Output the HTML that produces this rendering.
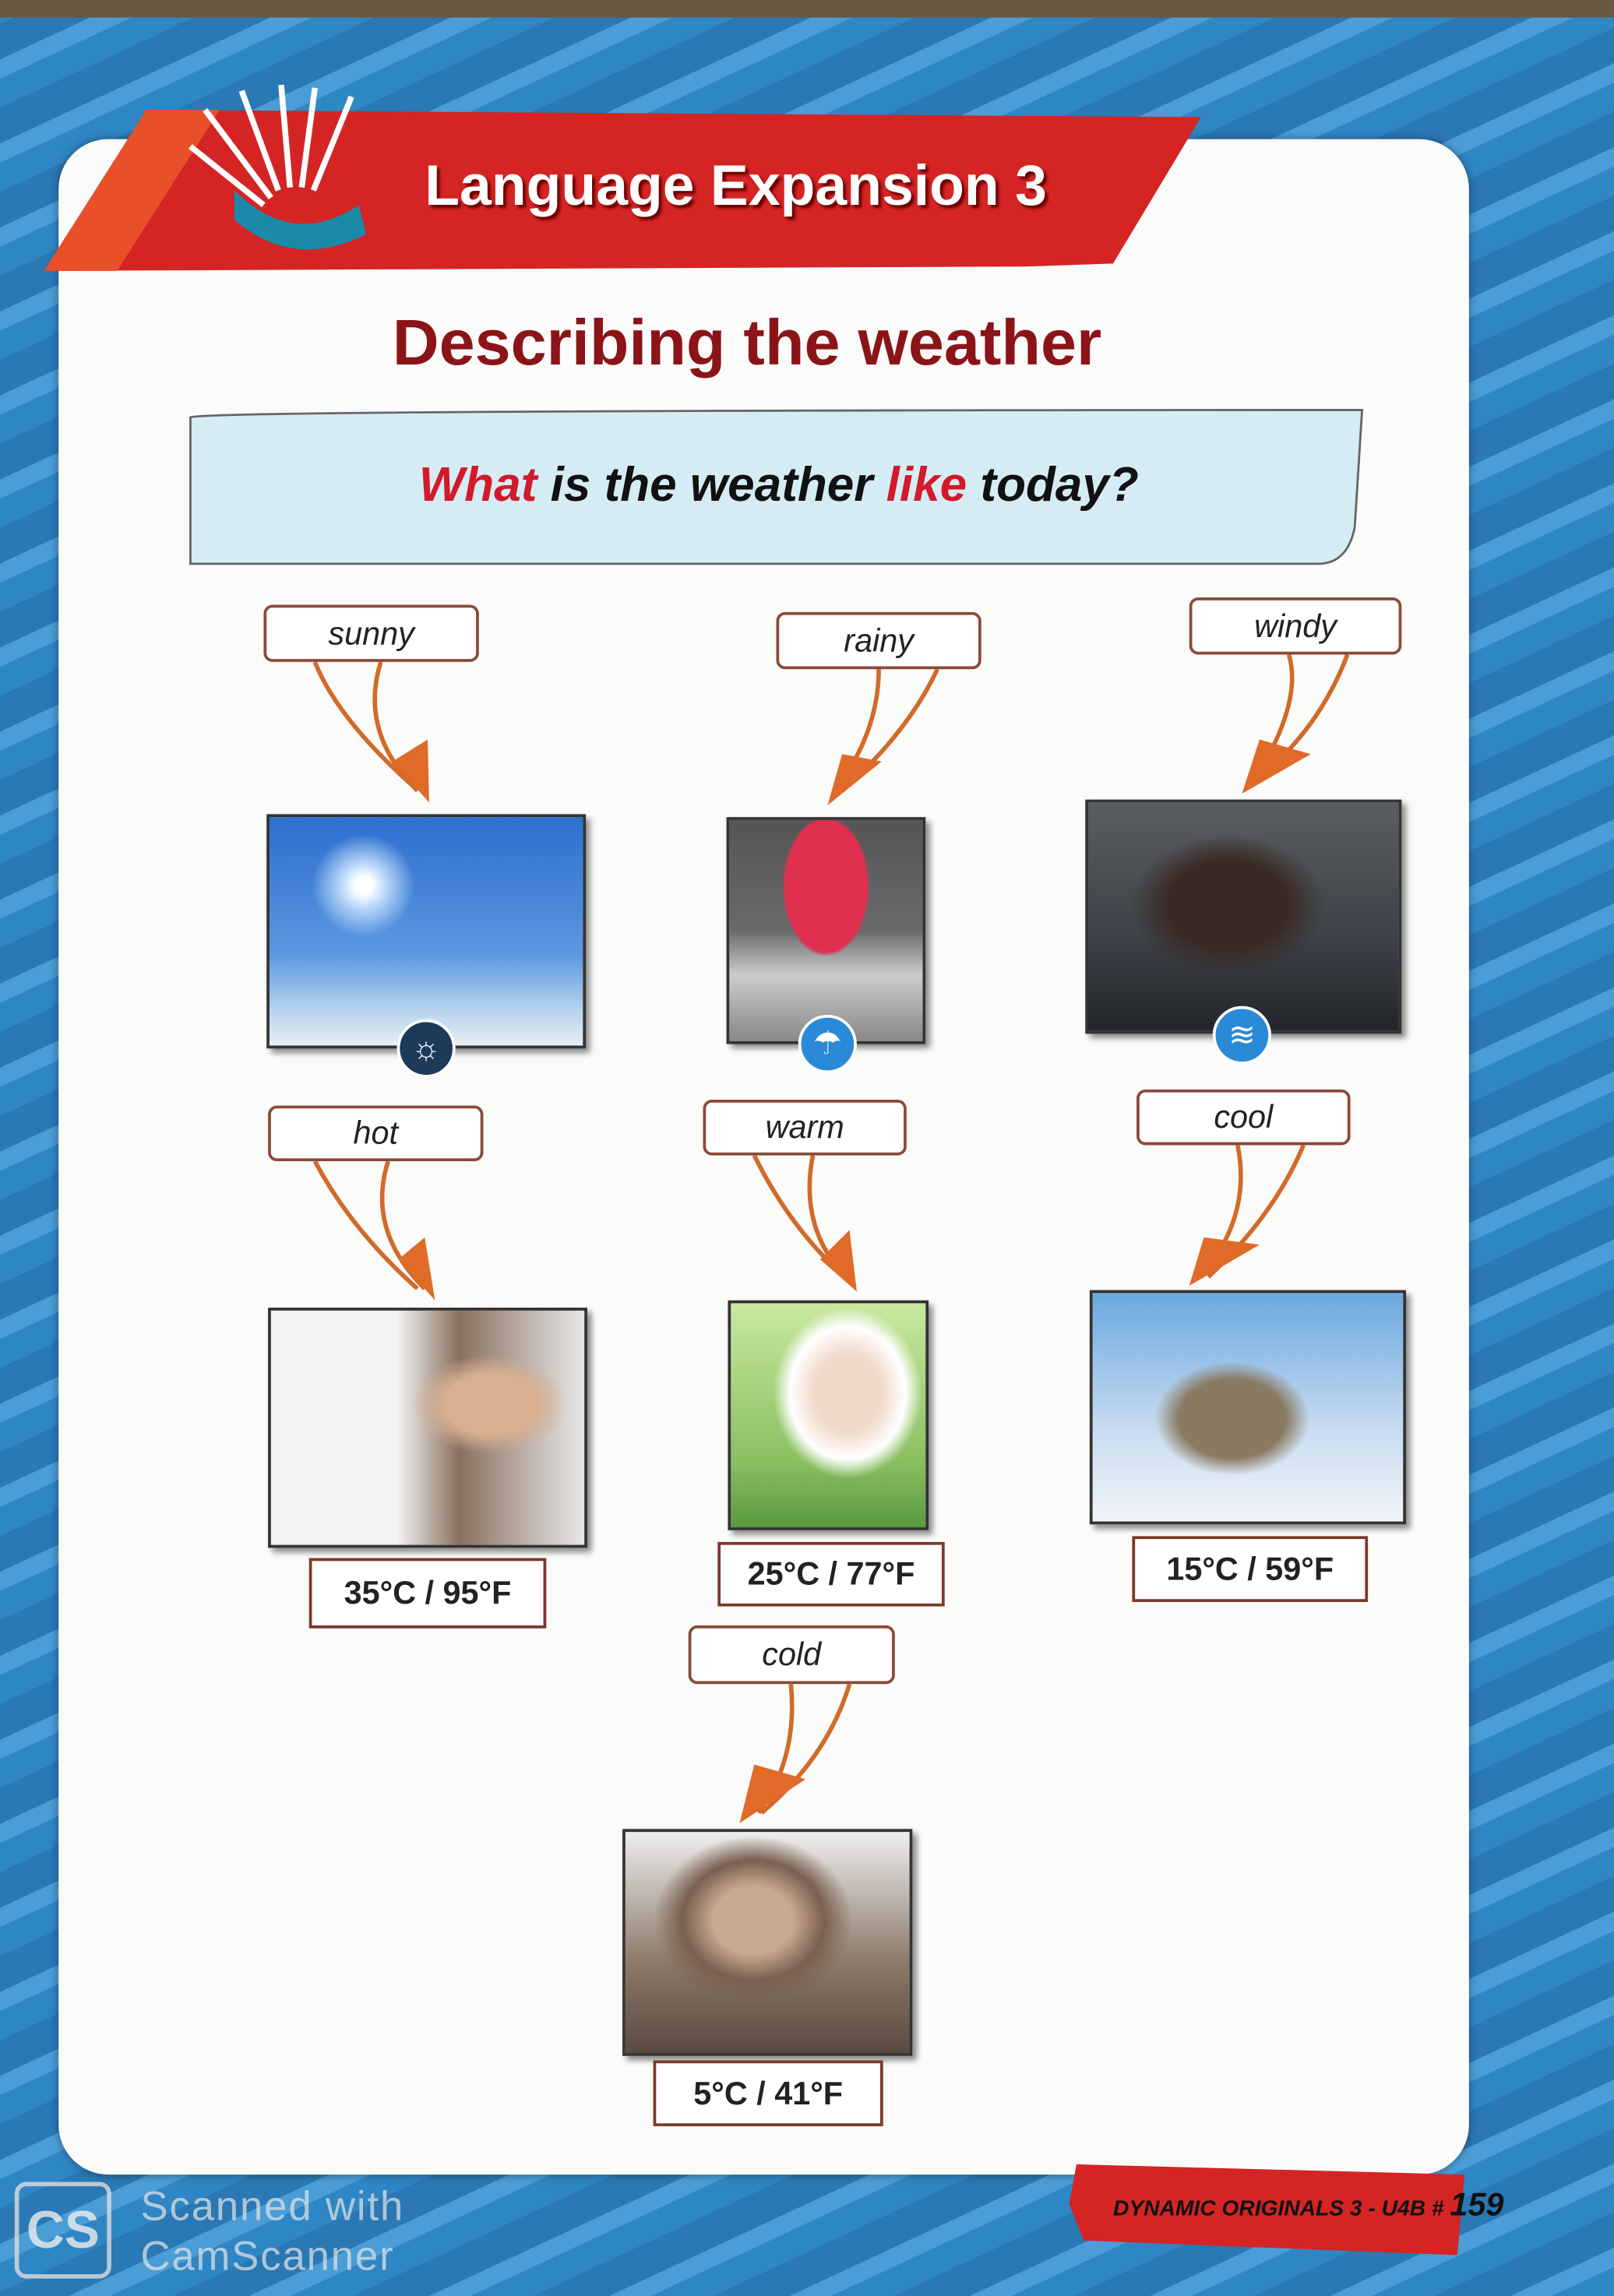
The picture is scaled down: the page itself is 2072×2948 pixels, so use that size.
<!DOCTYPE html>
<html><head><meta charset="utf-8"><style>
html,body{margin:0;padding:0;width:2072px;height:2948px;overflow:hidden;background:#2a7fb8}
#w{position:absolute;left:0;top:0;width:1102px;height:1568px;transform:scale(1.8802);transform-origin:0 0;overflow:hidden;
background:repeating-linear-gradient(-25deg,#2f86c4 0 18px,#4a9dd6 18px 30px,#2a78b4 30px 52px);font-family:"Liberation Sans",sans-serif}
.abs{position:absolute}
.card{left:40px;top:95px;width:963px;height:1390px;background:#fbfbfa;border-radius:34px;box-shadow:0 0 6px rgba(0,0,0,.4)}
.lbl{position:absolute;background:#fff;border:2px solid #8a4a3a;border-radius:6px;font-style:italic;font-size:22px;color:#222;text-align:center;box-sizing:border-box}
.ph{position:absolute;border:2px solid #333;box-shadow:3px 3px 4px rgba(0,0,0,.45);box-sizing:border-box}
.tmp{position:absolute;background:#fff;border:2px solid #7a3a2a;font-weight:bold;font-size:22px;color:#222;text-align:center;box-sizing:border-box}
.ic{position:absolute;width:40px;height:40px;border-radius:50%;border:2px solid #fff;box-sizing:border-box;color:#fff;font-size:22px;text-align:center;line-height:36px}
</style></head><body><div id="w">
<div class="abs" style="left:0;top:0;width:1102px;height:12px;background:#6a5840"></div>
<div class="abs card"></div>
<svg class="abs" style="left:0;top:0" width="1102" height="1568">
<polygon points="30,185 100,75 820,80 760,180 700,182" fill="#d42424"/>
<polygon points="30,185 100,75 150,75 80,185" fill="#e8502a"/>
<g stroke="#fff" stroke-width="4"><line x1="185" y1="135" x2="140" y2="75"/><line x1="190" y1="130" x2="165" y2="62"/><line x1="198" y1="128" x2="192" y2="58"/><line x1="206" y1="128" x2="215" y2="60"/><line x1="214" y1="130" x2="240" y2="66"/><line x1="180" y1="140" x2="130" y2="100"/></g>
<path d="M160,130 Q200,170 245,140 L250,160 Q200,185 160,150Z" fill="#1a8aa8"/>
<path d="M130,285 Q140,280 930,280 L925,360 Q920,385 900,385 L130,385Z" fill="#d6ecf5" stroke="#666" stroke-width="1.5"/>
<g fill="none" stroke="#d26a2a" stroke-width="3">
<path d="M215,452 Q230,490 280,535"/><path d="M260,452 Q245,500 285,540"/>
<path d="M640,457 Q620,500 575,540"/><path d="M600,457 Q600,500 570,540"/>
<path d="M920,447 Q900,500 855,535"/><path d="M880,447 Q890,480 855,535"/>
<path d="M215,793 Q240,840 285,880"/><path d="M265,793 Q250,840 290,880"/>
<path d="M515,789 Q540,840 580,875"/><path d="M555,789 Q545,840 580,875"/>
<path d="M890,782 Q870,830 825,872"/><path d="M845,782 Q855,830 820,872"/>
<path d="M580,1150 Q565,1200 520,1238"/><path d="M540,1150 Q545,1200 518,1238"/>
</g>
<g fill="#e06a28">
<polygon points="268,520 293,548 292,505"/><polygon points="565,550 602,520 575,515"/>
<polygon points="848,542 895,515 860,505"/><polygon points="272,860 297,888 290,845"/>
<polygon points="585,882 580,840 560,860"/><polygon points="812,878 860,850 822,845"/>
<polygon points="505,1245 550,1215 515,1205"/>
</g>
<polygon points="735,1478 1000,1485 995,1540 740,1530 730,1505" fill="#d42424"/>
</svg>
<div class="abs" style="left:290px;top:106px;font-size:39px;color:#fff;font-weight:bold;text-shadow:2px 2px 2px #600">Language Expansion 3</div>
<div class="abs" style="left:268px;top:210px;font-size:44px;color:#8a1418;font-weight:bold">Describing the weather</div>
<div class="abs" style="left:286px;top:312px;font-size:33px;font-weight:bold;font-style:italic;color:#111"><span style="color:#d21a2a">What</span> is the weather <span style="color:#d21a2a">like</span> today?</div>
<div class="lbl" style="left:180px;top:413px;width:147px;height:39px;line-height:35px">sunny</div>
<div class="lbl" style="left:530px;top:418px;width:140px;height:39px;line-height:35px">rainy</div>
<div class="lbl" style="left:812px;top:408px;width:145px;height:39px;line-height:35px">windy</div>
<div class="lbl" style="left:183px;top:755px;width:147px;height:38px;line-height:34px">hot</div>
<div class="lbl" style="left:480px;top:751px;width:139px;height:38px;line-height:34px">warm</div>
<div class="lbl" style="left:776px;top:744px;width:146px;height:38px;line-height:34px">cool</div>
<div class="lbl" style="left:470px;top:1110px;width:141px;height:40px;line-height:36px">cold</div>
<div class="ph" style="left:182px;top:556px;width:218px;height:160px;background:radial-gradient(circle at 30% 30%,#fff 0 6px,#cfe6ff 12px,transparent 35px),linear-gradient(#2e6fd0,#5a98e0 60%,#b8d4ee 85%,#e8eef4)"></div>
<div class="ph" style="left:496px;top:558px;width:136px;height:155px;background:radial-gradient(ellipse at 50% 30%,#e03050 0 30%,transparent 32%),linear-gradient(#555,#6a6a6a 50%,#ccc 70%,#888)"></div>
<div class="ph" style="left:741px;top:546px;width:216px;height:160px;background:radial-gradient(ellipse at 45% 45%,#3a2a24 0 25%,transparent 40%),linear-gradient(#5a5e62,#3c4248 60%,#22262a)"></div>
<div class="ph" style="left:183px;top:893px;width:218px;height:164px;background:radial-gradient(ellipse at 70% 40%,#d8b090 0 15%,transparent 25%),linear-gradient(90deg,#f4f4f4 40%,#8a7060 60%,#e8e8e8)"></div>
<div class="ph" style="left:497px;top:888px;width:137px;height:157px;background:radial-gradient(ellipse at 60% 40%,#f0d8c8 0 20%,#fff 35%,transparent 45%),linear-gradient(#c8e8a0,#8ac060 70%,#5a9a40)"></div>
<div class="ph" style="left:744px;top:881px;width:216px;height:160px;background:radial-gradient(ellipse at 45% 55%,#8a7a60 0 22%,transparent 32%),linear-gradient(#6aa8e0,#c8dcf0 60%,#f0f4f8)"></div>
<div class="ph" style="left:425px;top:1249px;width:198px;height:155px;background:radial-gradient(ellipse at 45% 40%,#c8a890 0 18%,#7a6050 32%,transparent 45%),linear-gradient(#eee,#8a7868 60%,#5a4a40)"></div>
<div class="ic" style="left:271px;top:696px;background:#1e3a5a">☼</div>
<div class="ic" style="left:545px;top:693px;background:#2a8ad8">☂</div>
<div class="ic" style="left:828px;top:687px;background:#2a8ad8">≋</div>
<div class="tmp" style="left:211px;top:1064px;width:162px;height:48px;line-height:44px">35°C / 95°F</div>
<div class="tmp" style="left:490px;top:1053px;width:155px;height:44px;line-height:40px">25°C / 77°F</div>
<div class="tmp" style="left:773px;top:1049px;width:161px;height:45px;line-height:41px">15°C / 59°F</div>
<div class="tmp" style="left:446px;top:1407px;width:157px;height:45px;line-height:41px">5°C / 41°F</div>
<div class="abs" style="left:760px;top:1493px;font-size:15px;font-weight:bold;font-style:italic;color:#111">DYNAMIC ORIGINALS 3 - U4B # <span style="font-size:22px">159</span></div>
<div class="abs" style="left:10px;top:1490px;width:66px;height:66px;border:3px solid #ddd;border-radius:8px;box-sizing:border-box;color:#eee;font-size:36px;font-weight:bold;text-align:center;line-height:60px;opacity:.8">CS</div>
<div class="abs" style="left:96px;top:1490px;font-size:28px;color:rgba(230,230,230,.7);line-height:34px;letter-spacing:1px">Scanned with<br>CamScanner</div>
</div></body></html>
